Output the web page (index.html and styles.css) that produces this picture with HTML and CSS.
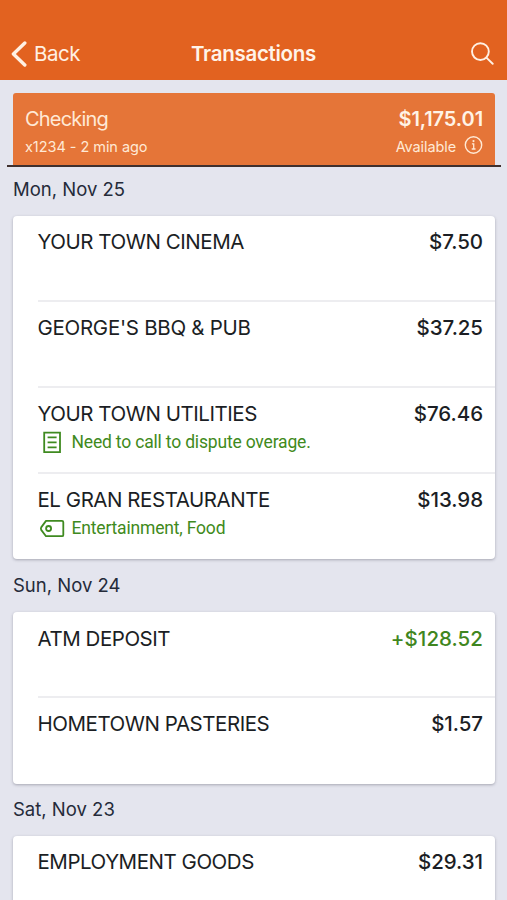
FILE: index.html
```html
<!DOCTYPE html>
<html lang="en">
<head>
<meta charset="utf-8">
<title>Transactions</title>
<link rel="stylesheet" href="styles.css">
</head>
<body>
<header class="navbar">
  <a class="back"><svg width="16" height="26" viewBox="0 0 16 26"><path d="M13.8 2 2.4 13 13.8 24" fill="none" stroke="currentColor" stroke-width="3.4" stroke-linecap="round" stroke-linejoin="round"/></svg><span>Back</span></a>
  <h1 class="title">Transactions</h1>
  <svg class="search" width="24" height="24" viewBox="0 0 24 24"><g fill="none" stroke="currentColor" stroke-width="1.9" stroke-linecap="round"><circle cx="10.4" cy="9.6" r="8.4"/><path d="m16.4 15.6 6.3 6.2"/></g></svg>
</header>
<main>
  <section class="account-wrap">
    <div class="account">
      <div class="account-row"><span class="account-name">Checking</span><strong class="balance">$1,175.01</strong></div>
      <div class="account-row account-meta"><span class="updated">x1234 - 2 min ago</span><span class="available"><span>Available</span><svg width="19" height="20" viewBox="0 0 19 20"><circle cx="9.5" cy="9" r="8.2" fill="none" stroke="currentColor" stroke-width="1.4"/><path d="M7.9 7.8H9.7V13M7.7 13H11.5" fill="none" stroke="currentColor" stroke-width="1.3"/><circle cx="9.5" cy="5.1" r="1.1" fill="currentColor"/></svg></span></div>
    </div>
  </section>
  <h2 class="date date-mon">Mon, Nov 25</h2>
  <ul class="card">
    <li class="row"><div class="line"><span class="name">YOUR TOWN CINEMA</span><span class="amount">$7.50</span></div></li>
    <li class="row"><div class="line"><span class="name name-loose">GEORGE'S BBQ &amp; PUB</span><span class="amount">$37.25</span></div></li>
    <li class="row"><div class="line"><span class="name">YOUR TOWN UTILITIES</span><span class="amount">$76.46</span></div>
      <div class="note"><svg width="28" height="24" viewBox="0 0 28 24"><g fill="none" stroke="currentColor" stroke-width="1.8"><path d="M6.2 2.7H22V22.1H6.2Z"/><path d="M9.6 7.4H18.6M9.6 12.4H18.6M9.6 17.4H18.6"/></g></svg><span class="memo">Need to call to dispute overage.</span></div></li>
    <li class="row"><div class="line"><span class="name">EL GRAN RESTAURANTE</span><span class="amount">$13.98</span></div>
      <div class="note"><svg width="28" height="24" viewBox="0 0 28 24"><g fill="none" stroke="currentColor" stroke-width="1.8" stroke-linejoin="round"><path d="M8 4.9H24Q25.3 4.9 25.3 6.2V18.9Q25.3 20.2 24 20.2H8L3.2 13.9Q2.6 12.6 3.2 11.4Z"/><circle cx="10.6" cy="12.5" r="2.5"/></g></svg><span class="tags">Entertainment, Food</span></div></li>
  </ul>
  <h2 class="date date-sun">Sun, Nov 24</h2>
  <ul class="card card-sun">
    <li class="row"><div class="line"><span class="name">ATM DEPOSIT</span><span class="amount credit">+$128.52</span></div></li>
    <li class="row"><div class="line"><span class="name">HOMETOWN PASTERIES</span><span class="amount">$1.57</span></div></li>
  </ul>
  <h2 class="date date-sat">Sat, Nov 23</h2>
  <ul class="card">
    <li class="row"><div class="line"><span class="name">EMPLOYMENT GOODS</span><span class="amount">$29.31</span></div></li>
  </ul>
</main>
</body>
</html>
```
FILE: styles.css
```css
* { box-sizing: border-box; }
html { height: 100%; overflow: hidden; }
body {
  margin: 0;
  height: 900px;
  overflow: hidden;
  background: #e4e5ee;
  color: #1b1e24;
  font-family: Inter, "Liberation Sans", sans-serif;
}
svg { display: block; flex: none; }
.navbar {
  height: 80px;
  padding: 27px 13px 0 11px;
  display: grid;
  grid-template-columns: 1fr auto 1fr;
  align-items: center;
  background: #e26220;
  color: #fff0e3;
}
.back { display: flex; align-items: center; gap: 7px; font-size: 20.5px; letter-spacing: -0.5px; }
.title { margin: 0; padding-left: 2px; font-size: 20.5px; font-weight: 600; letter-spacing: -0.28px; color: #fff4e9; }
.search { justify-self: end; }

.account-wrap { margin: 13px 6px 0 7px; padding: 0 6px; border-bottom: 2px solid #3f302e; }
.account {
  height: 72px;
  padding: 14px 12px 0 12px;
  border-radius: 3px 3px 0 0;
  background: #e57538;
  color: #ffe9d5;
}
.account-row { display: flex; justify-content: space-between; align-items: center; height: 24px; }
.account-meta { margin-top: 3px; font-size: 14.5px; letter-spacing: -0.05px; }
.account-name { font-size: 20px; letter-spacing: -0.8px; }
.balance { font-size: 20px; font-weight: 600; letter-spacing: -0.1px; color: #fff3e6; }
.available { display: flex; align-items: center; gap: 8px; letter-spacing: -0.1px; }

.date { margin: 0; padding-left: 13px; font-size: 18.5px; font-weight: 400; letter-spacing: 0; color: #252b3a; }
.date-mon { height: 49px; line-height: 45px; }
.date-sun { height: 53px; line-height: 53px; }
.date-sat { height: 52px; line-height: 51px; }

.card {
  margin: 0 12px 0 13px;
  padding: 0 0 0 24.5px;
  list-style: none;
  background: #fff;
  border-radius: 4px;
  box-shadow: 0 1px 3px rgba(50, 50, 65, .35);
}
.row { height: 86px; padding: 14px 12px 0 0; }
.row:first-child { height: 84px; }
.row:last-child { height: 87px; }
.row + .row { border-top: 2px solid #ededf0; }
.card-sun .row:first-child { padding-top: 15px; }
.card-sun .row:last-child { height: 88px; }
.line { display: flex; justify-content: space-between; height: 24px; line-height: 24px; font-size: 20.5px; }
.name { white-space: nowrap; letter-spacing: -0.46px; }
.name-loose { letter-spacing: -0.28px; }
.amount { font-weight: 500; letter-spacing: -0.05px; }
.credit { color: #3f8620; letter-spacing: 0.05px; }
.note { display: flex; align-items: center; gap: 6px; height: 24px; margin-top: 4px; color: #3f8a20; font-family: Roboto, sans-serif; font-size: 17.5px; letter-spacing: -0.18px; }
```
